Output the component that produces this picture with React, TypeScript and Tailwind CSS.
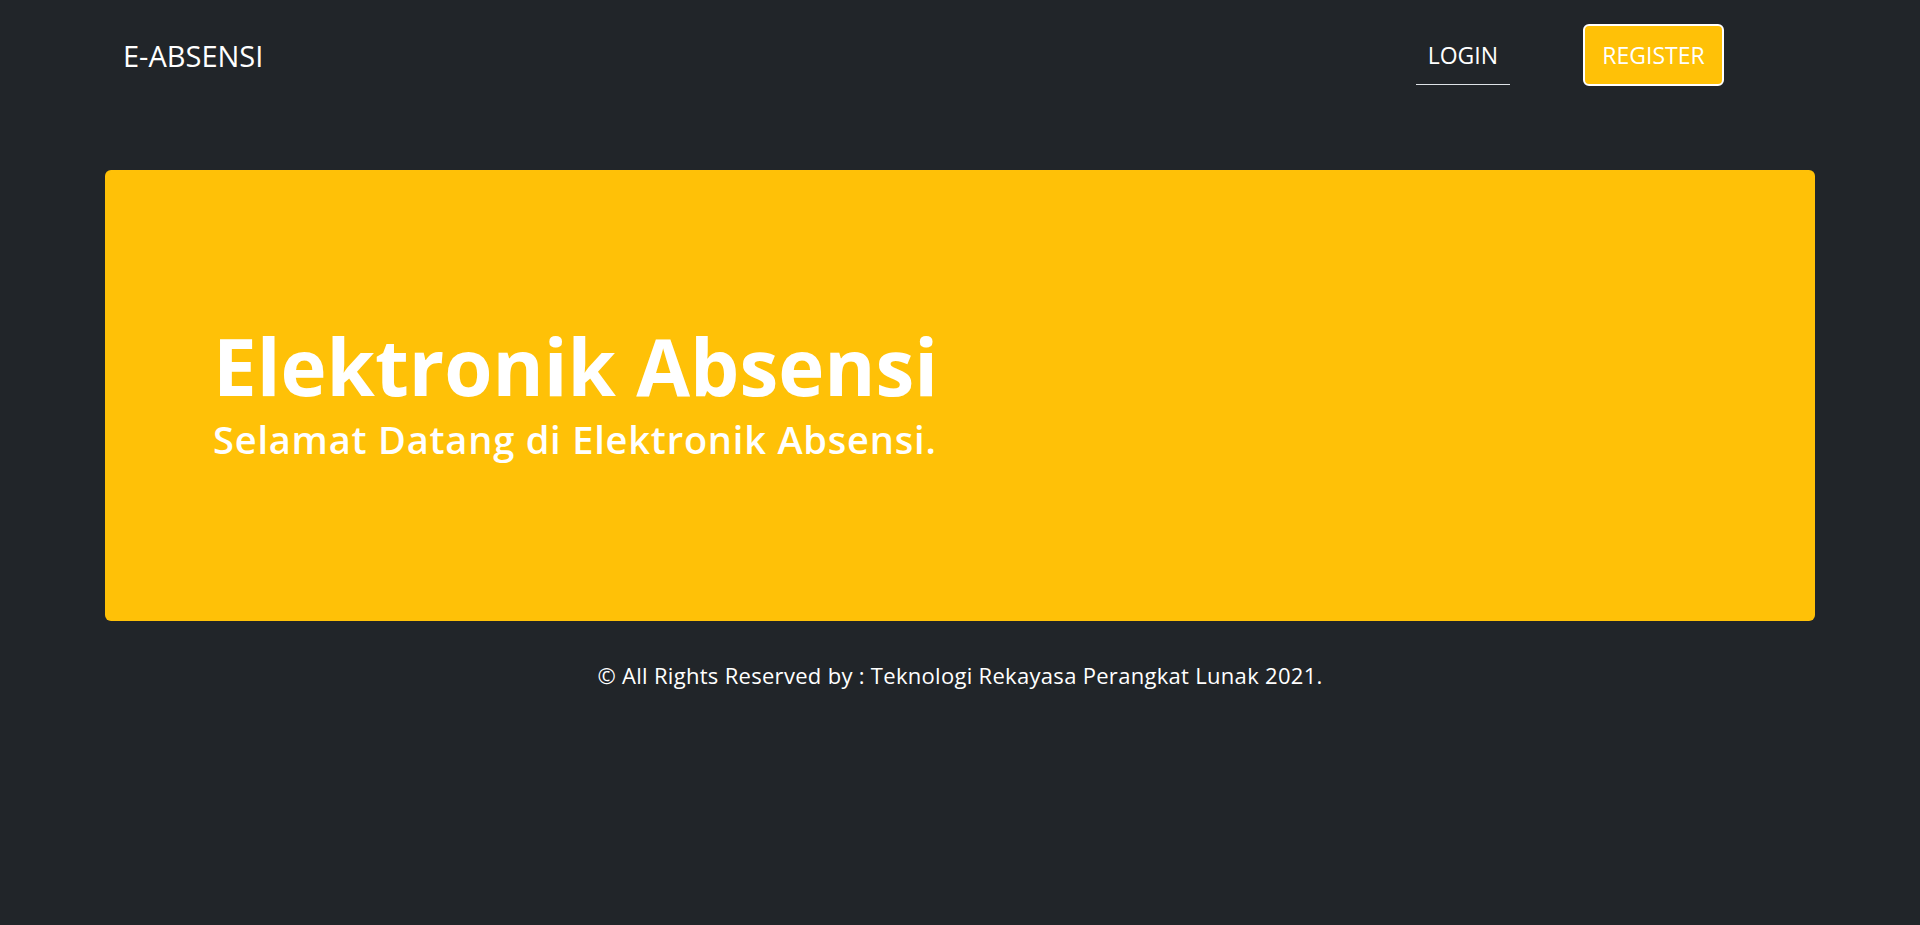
export default function App() {
  return (
    <div className="min-h-screen bg-[#212529] font-['Open_Sans',sans-serif] text-white">
      <nav className="flex items-center h-[110px] pl-[123px] pr-[196px]">
        <a href="#" className="text-[29px] leading-none">E-ABSENSI</a>
        <div className="ml-auto flex items-center gap-[73px]">
          <a href="#" className="block px-[12px] py-[14px] leading-[30px] text-[23px] border-b border-[#dee2e6]">
            LOGIN
          </a>
          <a
            href="#"
            className="flex items-center justify-center w-[141px] h-[62px] bg-[#ffc107] border-2 border-white rounded-[6px] text-[23px]"
          >
            REGISTER
          </a>
        </div>
      </nav>

      <div className="mx-[105px] mt-[60px] h-[451px] bg-[#ffc107] rounded-[6px] flex flex-col justify-center pl-[108px] pb-[4px]">
        <h1 className="text-[78px] font-bold leading-[1.1]">Elektronik Absensi</h1>
        <p className="mt-[7px] text-[38px] font-semibold leading-[1.2] tracking-[0.8px]">
          Selamat Datang di Elektronik Absensi.
        </p>
      </div>

      <footer className="mt-[39px] text-center text-[22px] leading-[30px] tracking-[0.3px]">
        © All Rights Reserved by : Teknologi Rekayasa Perangkat Lunak 2021.
      </footer>
    </div>
  );
}
